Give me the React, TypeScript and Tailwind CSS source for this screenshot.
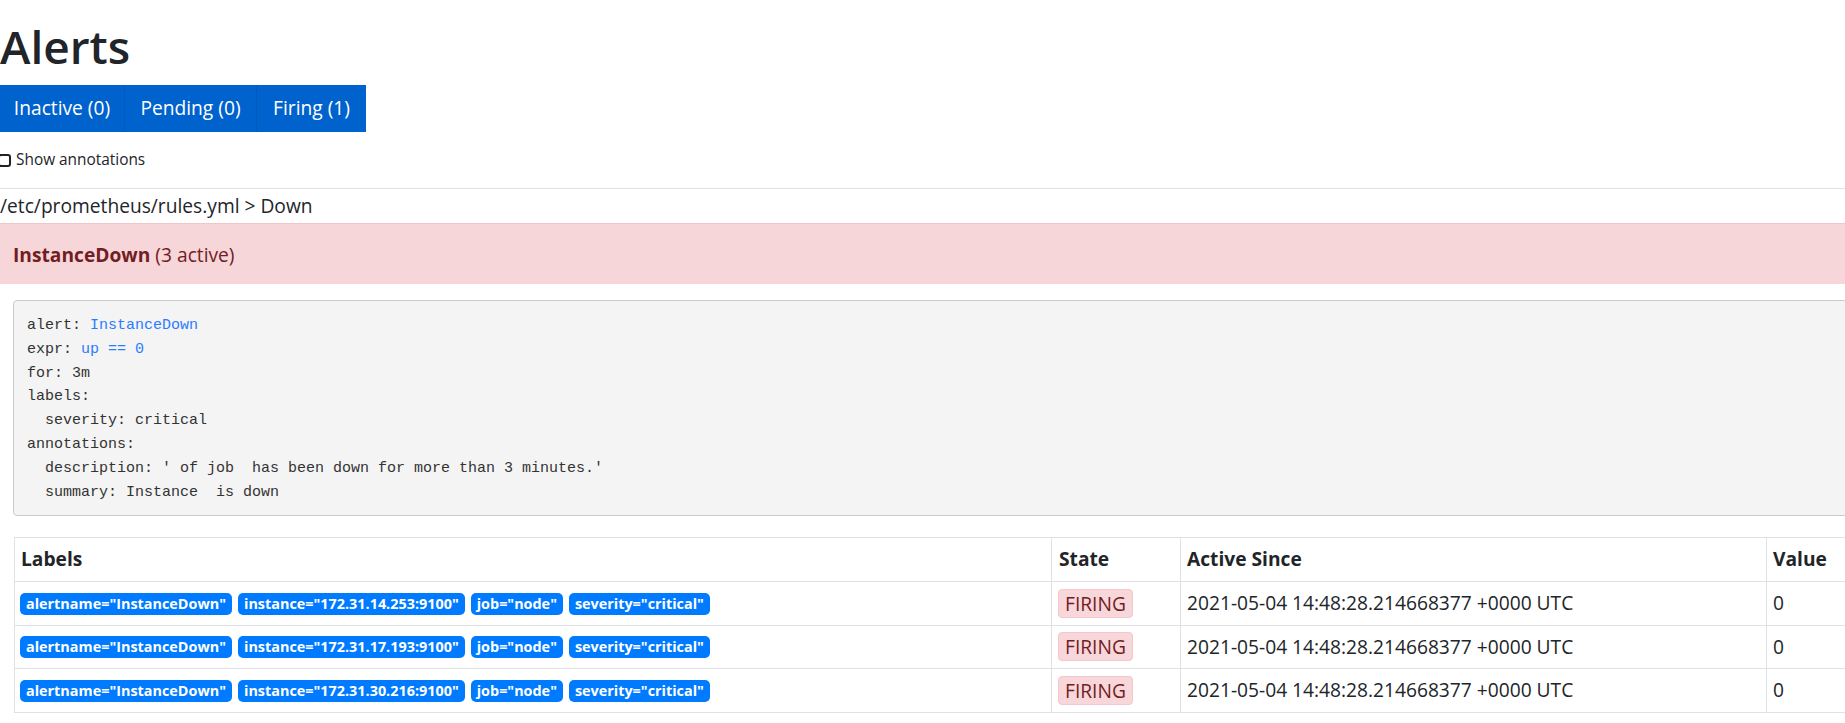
import React from "react";

const labelSets = [
  ["alertname=\"InstanceDown\"", "instance=\"172.31.14.253:9100\"", "job=\"node\"", "severity=\"critical\""],
  ["alertname=\"InstanceDown\"", "instance=\"172.31.17.193:9100\"", "job=\"node\"", "severity=\"critical\""],
  ["alertname=\"InstanceDown\"", "instance=\"172.31.30.216:9100\"", "job=\"node\"", "severity=\"critical\""],
];

const activeSince = "2021-05-04 14:48:28.214668377 +0000 UTC";

function Tabs() {
  return (
    <div className="mt-[9px] flex h-[47px] w-fit bg-[#0062cc] text-[19.2px] text-white">
      <div className="flex w-[124px] items-center justify-center">Inactive (0)</div>
      <div className="flex w-[132px] items-center justify-center border-l border-[#005bbf]">Pending (0)</div>
      <div className="flex w-[110px] items-center justify-center border-l border-[#005bbf]">Firing (1)</div>
    </div>
  );
}

function RuleDefinition() {
  const blue = "text-[#2b7cff]";
  return (
    <div className="ml-[13px] mt-[16px] rounded-[4px] border border-[#cccccc] bg-[#f4f4f4] pt-[13px] pb-[11px] pl-[13px]">
      <pre className="font-['Liberation_Mono',monospace] text-[15px] leading-[23.8px] text-[#333333] whitespace-pre">
        {"alert: "}<span className={blue}>InstanceDown</span>{"\n"}
        {"expr: "}<span className={blue}>up == 0</span>{"\n"}
        {"for: 3m\n"}
        {"labels:\n"}
        {"  severity: critical\n"}
        {"annotations:\n"}
        {"  description: ' of job  has been down for more than 3 minutes.'\n"}
        {"  summary: Instance  is down"}
      </pre>
    </div>
  );
}

function AlertsTable() {
  return (
    <table className="ml-[14px] mt-[21px] w-[1890px] border-collapse text-[19.2px]">
      <thead>
        <tr className="h-[44px]">
          <th className="w-[1037px] border border-[#dee2e6] px-[6px] text-left font-bold">Labels</th>
          <th className="w-[129px] border border-[#dee2e6] px-[7px] text-left font-bold">State</th>
          <th className="w-[586px] border border-[#dee2e6] px-[6px] text-left font-bold">Active Since</th>
          <th className="border border-[#dee2e6] px-[6px] text-left font-bold">Value</th>
        </tr>
      </thead>
      <tbody>
        {labelSets.map((labels, i) => (
          <tr key={i} className="h-[43.5px]">
            <td className="border border-[#dee2e6] px-[5px] py-0 align-middle">
              <div className="flex gap-[6px]">
                {labels.map((l) => (
                  <span
                    key={l}
                    className="rounded-[5px] bg-[#007bff] px-[6px] text-[14.4px] leading-[22px] font-bold text-white"
                  >
                    {l}
                  </span>
                ))}
              </div>
            </td>
            <td className="border border-[#dee2e6] px-[6px] py-0 align-middle">
              <span className="inline-block rounded-[4px] border border-[#f5c6cb] bg-[#f8d7da] px-[6px] leading-[27px] text-[#721c24]">
                FIRING
              </span>
            </td>
            <td className="border border-[#dee2e6] px-[6px] py-0 align-middle">{activeSince}</td>
            <td className="border border-[#dee2e6] px-[6px] py-0 align-middle">0</td>
          </tr>
        ))}
      </tbody>
    </table>
  );
}

export default function App() {
  return (
    <div className="h-screen w-screen overflow-hidden bg-white">
      <div className="w-[1920px] font-['Open_Sans',sans-serif] text-[#212529]">
        <h1 className="pt-[16px] text-[46px] leading-[60px] font-semibold">Alerts</h1>
        <Tabs />
        <label className="flex h-[56px] items-center gap-[5px] text-[15.4px]">
          <span className="ml-[-2px] h-[13px] w-[13px] rounded-[3px] border-[2.5px] border-[#222222]" />
          Show annotations
        </label>
        <div className="border-t border-[#dee2e6]" />
        <div className="flex h-[34px] items-center text-[19.2px]">/etc/prometheus/rules.yml &gt; Down</div>
        <div className="flex h-[61px] items-center border-t border-[#f1c6cb] bg-[#f6d6d9] pl-[13px] pt-[2px] text-[19.2px] text-[#721c24]">
          <span className="font-bold">InstanceDown</span>
          <span className="ml-[5px]">(3 active)</span>
        </div>
        <RuleDefinition />
        <AlertsTable />
      </div>
    </div>
  );
}
